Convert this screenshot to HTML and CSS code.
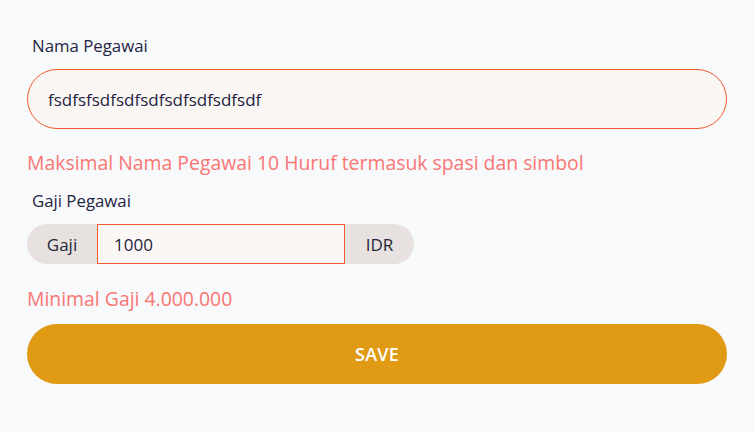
FILE: index.html
```html
<!DOCTYPE html>
<html lang="id">
<head>
<meta charset="utf-8">
<link rel="stylesheet" href="styles.css">
</head>
<body>
<form class="form">
  <div class="field">
    <label class="label">Nama Pegawai</label>
    <div class="pill-input">fsdfsfsdfsdfsdfsdfsdfsdfsdf</div>
  </div>
  <p class="error error-name">Maksimal Nama Pegawai 10 Huruf termasuk spasi dan simbol</p>
  <div class="field">
    <label class="label">Gaji Pegawai</label>
    <div class="group">
      <span class="addon addon-left">Gaji</span>
      <div class="group-input">1000</div>
      <span class="addon addon-right">IDR</span>
    </div>
  </div>
  <p class="error error-salary">Minimal Gaji 4.000.000</p>
  <button type="button" class="save">SAVE</button>
</form>
</body>
</html>
```
FILE: styles.css
```css
html, body {
  margin: 0;
  padding: 0;
  background: #f8f9fb;
}
body {
  font-family: "Open Sans", "Noto Sans", sans-serif;
  color: #1f2440;
}
.form {
  width: 700px;
  margin-left: 27px;
  padding-top: 36px;
  display: flex;
  flex-direction: column;
}
.field {
  display: flex;
  flex-direction: column;
}
.label {
  font-size: 16.8px;
  line-height: 20px;
  padding-left: 5px;
  margin-bottom: 13px;
}
.pill-input {
  box-sizing: border-box;
  height: 60px;
  border: 1px solid #f15a2b;
  border-radius: 30px;
  background: #faf6f4;
  font-size: 17px;
  display: flex;
  align-items: center;
  padding-left: 20px;
}
.error {
  margin: 0;
  color: #f87674;
  font-size: 19.4px;
  line-height: 24px;
}
.error-name {
  margin-top: 22px;
  margin-bottom: 16px;
}
.group {
  display: flex;
  height: 40px;
  width: 387px;
}
.addon {
  background: #e7e2df;
  color: #25283a;
  font-size: 17px;
  display: flex;
  align-items: center;
  justify-content: center;
}
.addon-left {
  width: 70px;
  border-radius: 20px 0 0 20px;
}
.addon-right {
  width: 69px;
  border-radius: 0 20px 20px 0;
}
.group-input {
  box-sizing: border-box;
  width: 248px;
  border: 1px solid #f15a2b;
  background: #fbf7f4;
  font-size: 17px;
  display: flex;
  align-items: center;
  padding-left: 16px;
}
.error-salary {
  margin-top: 23px;
  margin-bottom: 13px;
}
.save {
  height: 60px;
  border: none;
  border-radius: 30px;
  background: #e09a14;
  color: #ffffff;
  font-family: inherit;
  font-size: 18px;
  font-weight: 600;
  letter-spacing: 0.2px;
}
```
